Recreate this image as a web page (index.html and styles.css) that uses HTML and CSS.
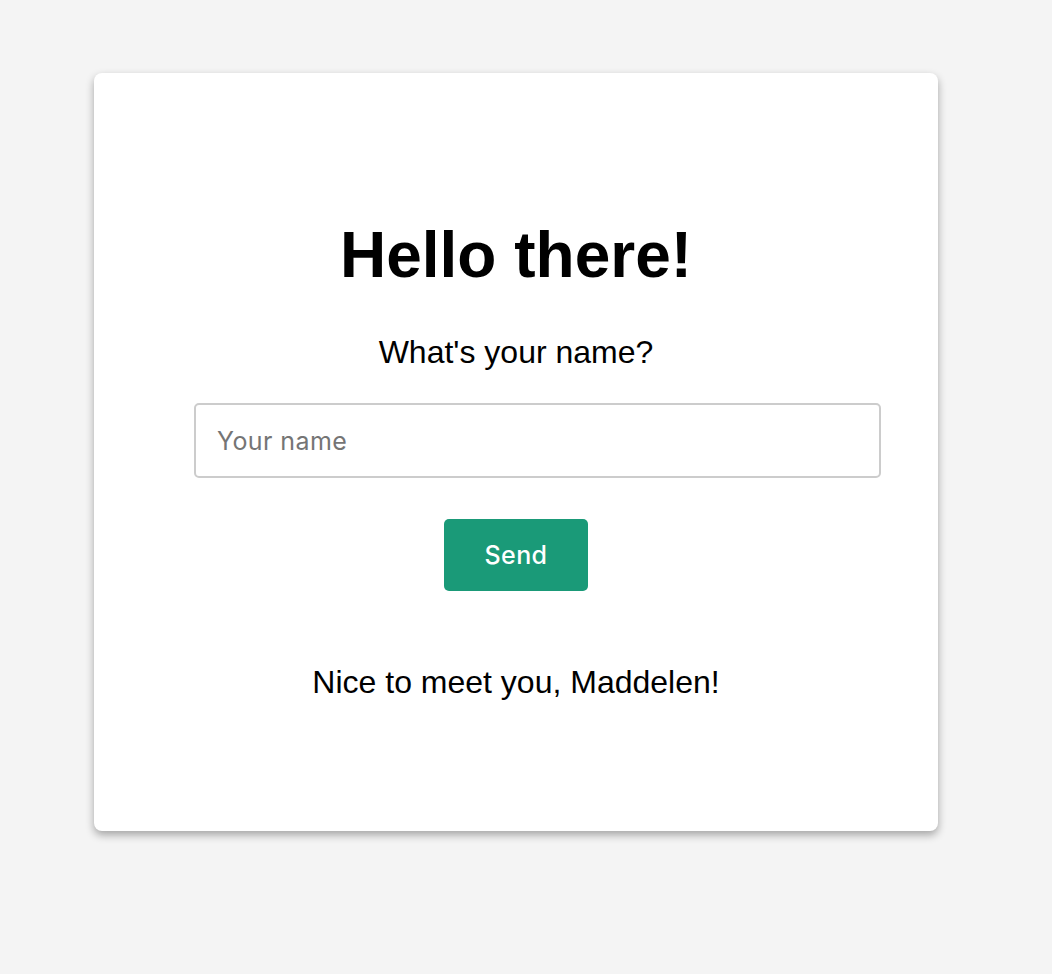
FILE: index.html
```html
<!DOCTYPE html>
<html lang="en">
<head>
<meta charset="utf-8">
<title>Hello there!</title>
<link rel="stylesheet" href="styles.css">
</head>
<body>
<main class="card">
  <h1 class="title">Hello there!</h1>
  <p class="question">What's your name?</p>
  <input class="name-input" type="text" placeholder="Your name">
  <button class="send-btn" type="button">Send</button>
  <p class="greeting">Nice to meet you, Maddelen!</p>
</main>
</body>
</html>
```
FILE: styles.css
```css
html, body {
  margin: 0;
  padding: 0;
  background: #f4f4f4;
}
body {
  font-family: "Liberation Sans", Arial, sans-serif;
  color: #000;
  padding-top: 73px;
  padding-left: 94px;
  height: 974px;
  box-sizing: border-box;
}
.card {
  width: 844px;
  height: 758px;
  box-sizing: border-box;
  background: #fff;
  border-radius: 8px;
  box-shadow: 0 4px 9px rgba(0, 0, 0, 0.33);
  padding: 145px 0 0 100px;
  display: flex;
  flex-direction: column;
  align-items: flex-start;
}
.title {
  margin: 0;
  width: 644px;
  text-align: center;
  font-size: 64px;
  line-height: 74px;
  font-weight: bold;
}
.question {
  margin: 42px 0 0 0;
  width: 644px;
  text-align: center;
  font-size: 32px;
  line-height: 37px;
}
.name-input {
  margin: 32px 0 0 0;
  width: 687px;
  height: 75px;
  box-sizing: border-box;
  border: 2px solid #cccccc;
  border-radius: 5px;
  padding: 0 21px;
  font-family: Inter, "Noto Sans", sans-serif;
  font-size: 25px;
  letter-spacing: 0.4px;
  color: #000;
  background: #fff;
  outline: none;
}
.name-input::placeholder {
  color: #757575;
}
.send-btn {
  margin: 41px 0 0 250px;
  width: 144px;
  height: 72px;
  border: none;
  border-radius: 5px;
  background: #1a9a78;
  color: #fff;
  font-family: Inter, "Noto Sans", sans-serif;
  font-size: 25px;
  letter-spacing: 0.4px;
  font-weight: 500;
  padding: 0;
}
.greeting {
  margin: 73px 0 0 0;
  width: 644px;
  text-align: center;
  font-size: 32px;
  line-height: 37px;
}
```
